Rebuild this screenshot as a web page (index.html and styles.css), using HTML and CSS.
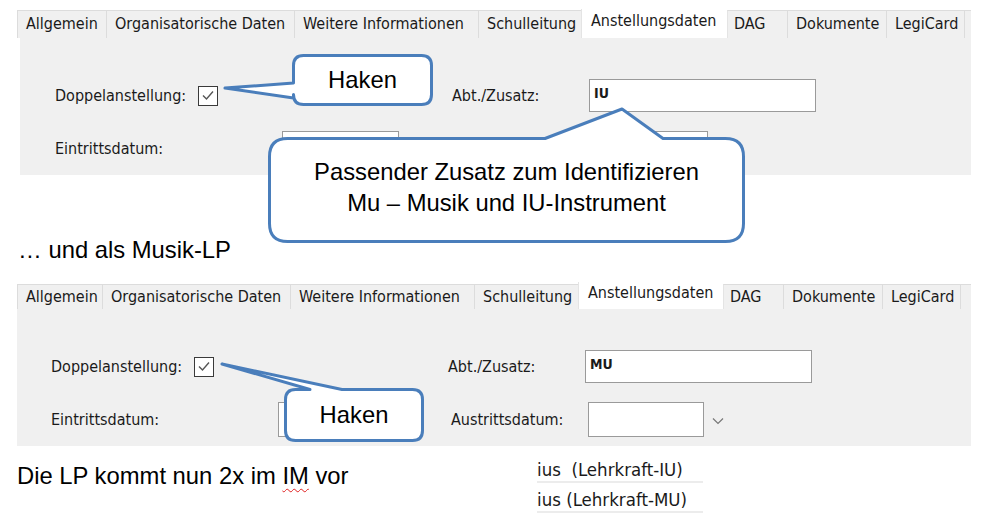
FILE: index.html
```html
<!DOCTYPE html>
<html lang="de">
<head>
<meta charset="utf-8">
<title>Anstellungsdaten</title>
<link rel="stylesheet" href="styles.css">
</head>
<body>
<div class="page">
  <section class="win win-1">
    <div class="tabs">
      <div class="tab">Allgemein</div>
      <div class="tab">Organisatorische Daten</div>
      <div class="tab">Weitere Informationen</div>
      <div class="tab">Schulleitung</div>
      <div class="tab active">Anstellungsdaten</div>
      <div class="tab tab-dag">DAG</div>
      <div class="tab">Dokumente</div>
      <div class="tab">LegiCard</div>
      <div class="tab-fill"></div>
    </div>
    <div class="panel">
      <div class="row row-1">
        <div class="left left-1">
          <span class="lbl lbl-check">Doppelanstellung:</span>
          <span class="checkbox"><svg viewBox="0 0 20 20" width="20" height="20"><polyline points="5,10.5 8.5,14 15,6.5" fill="none" stroke="#555" stroke-width="1.4"/></svg></span>
        </div>
        <span class="lbl lbl-right">Abt./Zusatz:</span>
        <div class="input input-wide">IU</div>
      </div>
      <div class="row row-2">
        <div class="left left-2">
          <span class="lbl lbl-date">Eintrittsdatum:</span>
          <div class="input input-date"></div>
        </div>
        <span class="lbl lbl-right">Austrittsdatum:</span>
        <div class="input input-date2"></div>
        <svg class="chev" viewBox="0 0 12 8" width="12" height="8"><polyline points="1,1.5 6,6.5 11,1.5" fill="none" stroke="#777" stroke-width="1.2"/></svg>
      </div>
    </div>
  </section>

  <p class="caption caption-mid">… und als Musik-LP</p>

  <section class="win win-2">
    <div class="tabs">
      <div class="tab">Allgemein</div>
      <div class="tab">Organisatorische Daten</div>
      <div class="tab">Weitere Informationen</div>
      <div class="tab">Schulleitung</div>
      <div class="tab active">Anstellungsdaten</div>
      <div class="tab tab-dag">DAG</div>
      <div class="tab">Dokumente</div>
      <div class="tab">LegiCard</div>
      <div class="tab-fill"></div>
    </div>
    <div class="panel">
      <div class="row row-1">
        <div class="left left-1">
          <span class="lbl lbl-check">Doppelanstellung:</span>
          <span class="checkbox"><svg viewBox="0 0 20 20" width="20" height="20"><polyline points="5,10.5 8.5,14 15,6.5" fill="none" stroke="#555" stroke-width="1.4"/></svg></span>
        </div>
        <span class="lbl lbl-right">Abt./Zusatz:</span>
        <div class="input input-wide">MU</div>
      </div>
      <div class="row row-2">
        <div class="left left-2">
          <span class="lbl lbl-date">Eintrittsdatum:</span>
          <div class="input input-date"></div>
        </div>
        <span class="lbl lbl-right">Austrittsdatum:</span>
        <div class="input input-date2"></div>
        <svg class="chev" viewBox="0 0 12 8" width="12" height="8"><polyline points="1,1.5 6,6.5 11,1.5" fill="none" stroke="#777" stroke-width="1.2"/></svg>
      </div>
    </div>
  </section>

  <div class="bottom">
    <p class="caption caption-bottom">Die LP kommt nun 2x im <span class="spell">IM</span> vor</p>
    <ul class="list">
      <li>ius&nbsp; (Lehrkraft-IU)</li>
      <li>ius (Lehrkraft-MU)</li>
    </ul>
  </div>

  <div class="callout callout-a">
    <svg class="bubble" viewBox="0 0 214 60" width="214" height="60"><path d="M81.5 5.5 H199.5 Q209.5 5.5 209.5 15.5 V44.5 Q209.5 54.5 199.5 54.5 H81.5 Q71.5 54.5 71.5 44.5 V48 L3 38 L71.5 33 V15.5 Q71.5 5.5 81.5 5.5 Z"/></svg>
    <div class="callout-text">Haken</div>
  </div>

  <div class="callout callout-b">
    <svg class="bubble" viewBox="0 0 481 140" width="481" height="140"><path d="M21.5 32.5 H279 L356 3 L397 32.5 H459.5 Q477.5 32.5 477.5 50.5 V117.5 Q477.5 135.5 459.5 135.5 H21.5 Q3.5 135.5 3.5 117.5 V50.5 Q3.5 32.5 21.5 32.5 Z"/></svg>
    <div class="callout-text">Passender Zusatz zum Identifizieren<br>Mu – Musik und IU-Instrument</div>
  </div>

  <div class="callout callout-c">
    <svg class="bubble" viewBox="0 0 209 85" width="209" height="85"><path d="M77.5 29.5 H92 L4 4 L124 29.5 H194.5 Q204.5 29.5 204.5 39.5 V70.5 Q204.5 80.5 194.5 80.5 H77.5 Q67.5 80.5 67.5 70.5 V39.5 Q67.5 29.5 77.5 29.5 Z"/></svg>
    <div class="callout-text">Haken</div>
  </div>
</div>
</body>
</html>
```

FILE: styles.css
```css
* { box-sizing: border-box; }

html, body {
  margin: 0;
  padding: 0;
  background: #ffffff;
}

.page {
  position: relative;
  width: 992px;
  height: 526px;
  overflow: hidden;
  background: #ffffff;
  padding-top: 9px;
  font-family: "DejaVu Sans Condensed", "DejaVu Sans", sans-serif;
  color: #1a1a1a;
}

/* ---------- window (tab control) ---------- */
.win {
  margin-left: 17px;
  width: 954px;
}

.tabs {
  display: grid;
  grid-template-columns: 89px 188px 184px 103px 146px 60px 99px 78px 1fr;
  align-items: end;
  height: 29px;
  font-size: 16px;
}

.win-2 .tabs {
  grid-template-columns: 85px 188px 184px 104px 145px 60px 99px 78px 1fr;
}

.tab {
  height: 28px;
  padding: 0 0 0 8px;
  line-height: 26px;
  background: #f0f0f0;
  border-top: 1px solid #dcdcdc;
  border-left: 1px solid #dcdcdc;
  white-space: nowrap;
  overflow: hidden;
  color: #1a1a1a;
}

.tab.active {
  height: 29px;
  background: #ffffff;
  border-top: none;
  border-left: 1px solid #e4e4e4;
  line-height: 24px;
  padding-left: 9px;
}

.tab.active + .tab {
  border-left: 1px solid #e4e4e4;
}

.tab-dag {
  padding-left: 6px;
}

.tab-fill {
  height: 28px;
  background: #f0f0f0;
  border-top: 1px solid #dcdcdc;
  border-left: 1px solid #dcdcdc;
}

.panel {
  background: #f0f0f0;
  height: 137px;
  padding: 41px 0 0 35px;
  font-size: 16px;
}

.win-1 .panel {
  margin-left: 3px;
  padding-left: 35px;
}

.row {
  display: flex;
  align-items: center;
}

.row-1 {
  height: 33px;
}

.row-2 {
  height: 35px;
  margin-top: 19px;
}

.left {
  display: flex;
  align-items: center;
  height: 100%;
}

.left-1 { width: 397px; }
.left-2 { width: 400px; }

.lbl {
  white-space: nowrap;
}

.lbl-check { width: 143px; }
.lbl-date { width: 227px; }
.lbl-right { width: 137px; }

.checkbox {
  display: block;
  width: 20px;
  height: 20px;
  border: 1.5px solid #3a3a3a;
  background: #ffffff;
}

.checkbox svg {
  display: block;
  margin: -1.5px 0 0 -1.5px;
}

.input {
  background: #ffffff;
  border: 1px solid #9a9a9a;
  height: 100%;
  font-weight: bold;
  font-size: 14px;
  padding: 5px 0 0 4px;
  color: #1a1a1a;
}

.input-wide { width: 227px; }
.input-date { width: 117px; }
.input-date2 { width: 116px; }

.chev {
  margin-left: 8px;
  margin-top: 2px;
}

/* ---------- second window ---------- */
.win-2 .tabs {
  height: 26px;
}

.win-2 .tab {
  height: 25px;
  line-height: 23px;
}

.win-2 .tab.active {
  height: 27px;
  line-height: 22px;
}

.win-2 .tab-fill {
  height: 25px;
}

.win-2 .panel {
  height: 138px;
  padding: 42px 0 0 34px;
}

/* ---------- captions ---------- */
.caption {
  margin: 0;
  font-family: "Liberation Sans", Arial, sans-serif;
  font-size: 23.8px;
  line-height: 28px;
  color: #000000;
}

.caption-mid {
  margin: 61px 0 18px 18px;
}

.bottom {
  display: flex;
  align-items: flex-start;
}

.caption-bottom {
  margin: 16px 0 0 17px;
  width: 520px;
}

.spell {
  text-decoration: underline wavy #e02020;
  text-decoration-thickness: 1px;
  text-underline-offset: 4px;
  text-decoration-skip-ink: none;
}

.list {
  list-style: none;
  margin: 7px 0 0 0;
  padding: 0;
  width: 166px;
  font-family: "DejaVu Sans Condensed", "DejaVu Sans", sans-serif;
  font-size: 18.5px;
  color: #1a1a1a;
}

.list li {
  height: 30px;
  padding: 7px 0 0 0;
  line-height: 20px;
  border-bottom: 2px solid #ececec;
  white-space: pre;
}

/* ---------- callouts ---------- */
.callout {
  position: absolute;
}

.bubble {
  position: absolute;
  left: 0;
  top: 0;
  display: block;
}

.bubble path {
  fill: #ffffff;
  stroke: #4a7ebb;
  stroke-width: 3;
  stroke-linejoin: round;
}

.callout-text {
  position: absolute;
  font-family: "Liberation Sans", Arial, sans-serif;
  font-size: 23.8px;
  color: #000000;
  text-align: center;
  display: flex;
  align-items: center;
  justify-content: center;
}

.callout-a {
  left: 222px;
  top: 50px;
  width: 214px;
  height: 60px;
}

.callout-a .callout-text {
  left: 70px;
  top: 4px;
  width: 141px;
  height: 52px;
  line-height: 28px;
}

.callout-b {
  left: 266px;
  top: 106px;
  width: 481px;
  height: 140px;
}

.callout-b .callout-text {
  left: 2px;
  top: 31px;
  width: 477px;
  height: 106px;
  line-height: 31px;
  padding-bottom: 6px;
}

.callout-c {
  left: 218px;
  top: 360px;
  width: 209px;
  height: 85px;
}

.callout-c .callout-text {
  left: 66px;
  top: 28px;
  width: 140px;
  height: 54px;
  line-height: 28px;
}
```
